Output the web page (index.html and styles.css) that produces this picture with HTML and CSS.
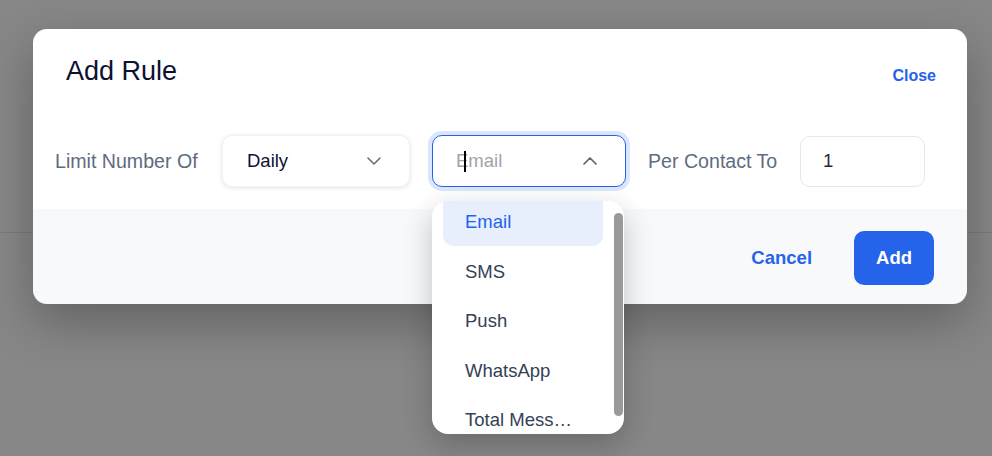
FILE: index.html
```html
<!DOCTYPE html>
<html lang="en">
<head>
<meta charset="utf-8">
<title>Add Rule</title>
<link rel="stylesheet" href="styles.css">
</head>
<body>
<div class="backdrop-page">
  <div class="backdrop-header"></div>
</div>
<div class="overlay">
  <div class="modal">
    <div class="modal-body">
      <div class="modal-header">
        <h2 class="modal-title">Add Rule</h2>
        <a class="close-link">Close</a>
      </div>
      <div class="rule-row">
        <span class="row-label label-limit">Limit Number Of</span>
        <div class="select select-daily">
          <span class="select-value">Daily</span>
          <svg class="chevron" width="14" height="8" viewBox="0 0 14 8"><polyline points="1,1 7,7 13,1" fill="none" stroke="#6b7078" stroke-width="1.6" stroke-linecap="round" stroke-linejoin="round"/></svg>
        </div>
        <div class="select-wrap">
          <div class="select select-open">
            <span class="select-placeholder">Email</span>
            <span class="caret"></span>
            <svg class="chevron" width="14" height="8" viewBox="0 0 14 8"><polyline points="1,7 7,1 13,7" fill="none" stroke="#5f646c" stroke-width="1.7" stroke-linecap="round" stroke-linejoin="round"/></svg>
          </div>
          <div class="dropdown">
            <ul class="option-list">
              <li class="option option-active">Email</li>
              <li class="option">SMS</li>
              <li class="option">Push</li>
              <li class="option">WhatsApp</li>
              <li class="option">Total Messages</li>
            </ul>
            <div class="scroll-thumb"></div>
          </div>
        </div>
        <span class="row-label label-per">Per Contact To</span>
        <div class="number-input">1</div>
      </div>
    </div>
    <div class="modal-footer">
      <button class="btn btn-cancel">Cancel</button>
      <button class="btn btn-add">Add</button>
    </div>
  </div>
</div>
</body>
</html>
```
FILE: styles.css
```css
* { box-sizing: border-box; }

html, body {
  margin: 0;
  padding: 0;
  width: 992px;
  height: 456px;
  overflow: hidden;
}

body {
  background: #878787;
  font-family: "Liberation Sans", Arial, sans-serif;
  position: relative;
}

.backdrop-header {
  height: 233px;
  border-bottom: 1px solid #7b7b7b;
}

.overlay {
  position: absolute;
  inset: 0;
  padding: 29px 0 0 33px;
}

.modal {
  width: 934px;
  border-radius: 14px;
  box-shadow: 0 18px 50px rgba(0, 0, 0, 0.28);
}

.modal-body {
  background: #ffffff;
  border-radius: 14px 14px 0 0;
  padding: 26px 31px 22px 22px;
}

.modal-header {
  display: flex;
  justify-content: space-between;
  align-items: flex-start;
  padding-left: 11px;
}

.modal-title {
  margin: 0;
  font-size: 27px;
  line-height: 32px;
  font-weight: 400;
  color: #0d1132;
}

.close-link {
  margin-top: 11px;
  font-size: 16px;
  line-height: 19px;
  font-weight: 700;
  color: #2563eb;
}

.rule-row {
  margin-top: 48px;
  display: flex;
  align-items: center;
  gap: 22px;
  height: 52px;
}

.row-label {
  font-size: 19.6px;
  color: #5e6b80;
  white-space: nowrap;
  flex: none;
}

.label-limit { width: 145px; }
.label-per { width: 130px; }

.select {
  height: 52px;
  border-radius: 10px;
  display: flex;
  align-items: center;
  justify-content: space-between;
  background: #ffffff;
  font-size: 18.5px;
  position: relative;
  flex: none;
}

.select-daily {
  width: 188px;
  padding: 0 28px 0 24px;
  border: 1px solid #f1f2f4;
  box-shadow: 0 1px 4px rgba(15, 23, 42, 0.12);
  color: #0d1132;
}

.select-wrap {
  position: relative;
  flex: none;
}

.select-open {
  width: 194px;
  padding: 0 28px 0 23px;
  border: 1.5px solid #2563eb;
  box-shadow: 0 0 0 4px #dbe5fb;
}

.select-placeholder {
  color: #a1a4ab;
}

.caret {
  position: absolute;
  left: 31px;
  top: 15px;
  width: 2px;
  height: 21px;
  background: #000000;
}

.chevron {
  display: block;
}

.dropdown {
  position: absolute;
  left: 0;
  top: 66px;
  width: 192px;
  height: 233px;
  background: #ffffff;
  border-radius: 16px;
  overflow: hidden;
  box-shadow: 0 10px 30px rgba(0, 0, 0, 0.22);
  padding: 0 21px 0 11px;
  z-index: 2;
}

.option-list {
  list-style: none;
  margin: 0;
  padding: 0;
}

.option {
  height: 44.5px;
  line-height: 42px;
  margin-bottom: 5px;
  padding: 0 22px;
  border-radius: 10px;
  font-size: 18.5px;
  color: #334155;
  white-space: nowrap;
  overflow: hidden;
  text-overflow: ellipsis;
}

.option-active {
  background: #e8effc;
  color: #2563eb;
  border-radius: 0 0 10px 10px;
}

.scroll-thumb {
  position: absolute;
  right: 1.5px;
  top: 12px;
  width: 8.5px;
  height: 203px;
  border-radius: 5px;
  background: #9a9a9a;
}

.number-input {
  width: 125px;
  height: 51px;
  border: 1px solid #e2e8f0;
  border-radius: 10px;
  padding-left: 22px;
  display: flex;
  align-items: center;
  font-size: 18.5px;
  color: #1e293b;
  flex: none;
}

.modal-footer {
  background: #f8f9fb;
  border-radius: 0 0 14px 14px;
  padding: 22px 33px 19px;
  display: flex;
  justify-content: flex-end;
  gap: 20px;
}

.btn {
  height: 54px;
  padding: 0 22px;
  border: none;
  border-radius: 10px;
  font-family: "Liberation Sans", Arial, sans-serif;
  font-size: 18.5px;
  font-weight: 700;
  cursor: pointer;
}

.btn-cancel {
  background: transparent;
  color: #2563eb;
}

.btn-add {
  background: #2563eb;
  color: #ffffff;
}
```
